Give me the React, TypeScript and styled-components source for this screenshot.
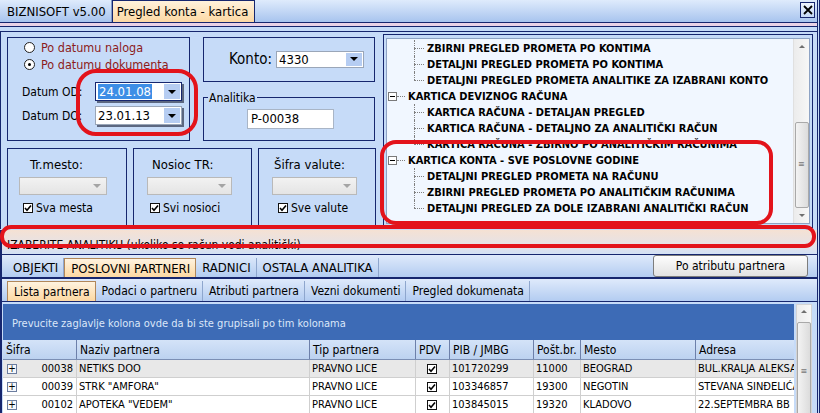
import React from 'react';
import styled, {createGlobalStyle, css} from 'styled-components';

const FONT = `"DejaVu Sans Condensed", "DejaVu Sans", sans-serif`;
const NAVY = '#16266e';
const RED = '#e3131b';
const PANEL = '#c6dbf8';

const GlobalStyle = createGlobalStyle`
  body {
    margin: 0;
    font-family: ${FONT};
    font-size: 11px;
    color: #000;
    background: ${PANEL};
  }
  * { box-sizing: border-box; }
`;

const Window = styled.div`
  position: relative;
  width: 820px;
  height: 413px;
  overflow: hidden;
  background: ${PANEL};
  border-right: 3px double ${NAVY};
`;

/* ---------- title bar ---------- */

const TitleBar = styled.div`
  display: flex;
  height: 23px;
  background: linear-gradient(#dfebfc, #a8c4ee);
  border-bottom: 1px solid ${NAVY};
`;

const TitleTab = styled.div<{ $active?: boolean }>`
  display: flex;
  align-items: center;
  padding: 0 5px 0 7px;
  font-size: 13px;
  border-right: 1px solid #7f9bc9;
  ${({$active}) => $active && css`
    background: linear-gradient(#fff2dc, #fcd8a4);
    border: 1px solid ${NAVY};
    border-bottom: none;
    padding: 0 6px 0 4px;
  `}
`;

const CloseButton = styled.div`
  margin: 2px 2px 0 auto;
  width: 15px;
  height: 16px;
  border: 1px solid ${NAVY};
  background: linear-gradient(#eef4fd, #c4d8f5);
  display: flex;
  align-items: center;
  justify-content: center;
`;

const TitleUnderline = styled.div`
  height: 4px;
  background: #ead2e6;
  border-bottom: 1px solid ${NAVY};
`;

/* ---------- top area ---------- */

const TopFrame = styled.div`
  margin-top: 4px;
  height: 198px;
  border-top: 1px solid ${NAVY};
  border-left: 1px solid ${NAVY};
  padding: 5px 0 0 6px;
  display: flex;
  gap: 7px;
`;

const LeftArea = styled.div`
  width: 369px;
  display: flex;
  flex-direction: column;
  gap: 7px;
`;

const TopRow = styled.div`
  display: flex;
  gap: 13px;
  height: 104px;
`;

const Panel = styled.div<{ $w: number; $h?: number }>`
  width: ${({$w}) => $w}px;
  height: ${({$h}) => ($h ? `${$h}px` : 'auto')};
  border: 1px solid ${NAVY};
  background: ${PANEL};
`;

const DatePanel = styled(Panel)`
  padding: 1px 0 0 16px;
`;

const RadioRow = styled.div`
  display: flex;
  align-items: center;
  gap: 6px;
  height: 17px;
  font-size: 12.5px;
  color: #8c1b1b;
`;

const Radio = styled.span<{ $checked?: boolean }>`
  width: 11px;
  height: 11px;
  border-radius: 50%;
  border: 1px solid #222;
  background: #fff;
  display: flex;
  align-items: center;
  justify-content: center;

  &::after {
    content: '';
    width: 3px;
    height: 3px;
    border-radius: 50%;
    background: ${({$checked}) => ($checked ? '#000' : 'transparent')};
  }
`;

const DateRow = styled.div<{ $mt: number }>`
  display: flex;
  align-items: center;
  margin: ${({$mt}) => $mt}px 0 0 -2px;
  height: 19px;
`;

const FieldLabel = styled.span`
  width: 73px;
  font-size: 12px;
`;

const Combo = styled.div<{ $w: number; $h?: number; $focus?: boolean; $shadow?: boolean }>`
  width: ${({$w}) => $w}px;
  height: ${({$h}) => $h || 19}px;
  display: flex;
  align-items: center;
  justify-content: space-between;
  background: #fff;
  border: 1px solid ${({$focus}) => ($focus ? NAVY : '#9aa6b8')};
  box-shadow: ${({$shadow}) => ($shadow ? '2px 2px 0 #5c6780' : 'none')};
  padding: 0 1px 0 2px;
  font-size: 13px;
`;

const Selected = styled.span`
  background: #3d8ee6;
  color: #fff;
  padding: 0 1px;
  line-height: 15px;
`;

const DropButton = styled.span<{ $disabled?: boolean }>`
  width: 16px;
  height: calc(100% - 2px);
  display: flex;
  align-items: center;
  justify-content: center;
  background: ${({$disabled}) => ($disabled ? 'transparent' : '#b6cdf2')};

  &::after {
    content: '';
    border-left: 4px solid transparent;
    border-right: 4px solid transparent;
    border-top: 4px solid ${({$disabled}) => ($disabled ? '#a4a4a4' : '#000')};
  }
`;

const DisabledCombo = styled(Combo)`
  background: linear-gradient(#f2f2f2, #e4e4e4);
  border-color: #b9b9b9;
`;

const KontoCol = styled.div`
  width: 172px;
  display: flex;
  flex-direction: column;
`;

const KontoPanel = styled(Panel)`
  display: flex;
  align-items: center;
  padding-left: 25px;
  gap: 4px;
  font-size: 15px;
`;

const Fieldset = styled.fieldset`
  margin: 9px 0 0;
  height: 51px;
  border: 1px solid ${NAVY};
  padding: 4px 0 0 5px;
`;

const Legend = styled.legend`
  padding: 0 1px;
  margin-left: -1px;
  font-size: 12px;
  line-height: 14px;
`;

const TextBox = styled.div`
  margin-left: 38px;
  width: 87px;
  height: 20px;
  background: #fff;
  border: 1px solid #a9b5c6;
  font-size: 13px;
  padding: 1px 3px;
`;

const FilterRow = styled.div`
  display: flex;
  gap: 6px;
  height: 80px;
`;

const FilterPanel = styled(Panel)`
  display: flex;
  flex-direction: column;
`;

const FilterLabel = styled.div<{ $indent: number }>`
  margin: 8px 0 0 ${({$indent}) => $indent}px;
  height: 16px;
  font-size: 13px;
`;

const FilterCombo = styled(DisabledCombo)<{ $indent: number }>`
  margin: 4px 0 0 ${({$indent}) => $indent}px;
`;

const CheckRow = styled.div<{ $indent: number }>`
  display: flex;
  align-items: center;
  gap: 3px;
  margin: 6px 0 0 ${({$indent}) => $indent}px;
  font-size: 12px;
`;

const CheckBox = styled.span`
  width: 10px;
  height: 10px;
  border: 1px solid #111;
  background: #fff;
  display: inline-flex;
  align-items: center;
  justify-content: center;
`;

/* ---------- tree ---------- */

const TreePanel = styled.div`
  width: 430px;
  height: 194px;
  margin-top: -3px;
  border: 1px solid ${NAVY};
  padding: 3px 2px 3px 2px;
`;

const TreeBody = styled.div`
  height: 100%;
  background: #f1f7ff;
  border: 1px solid #8ea3c4;
  display: flex;
`;

const TreeList = styled.div`
  flex: 1;
  padding-top: 1px;
  overflow: hidden;
`;

const TreeRow = styled.div`
  display: flex;
  align-items: center;
  height: 16px;
  font-weight: bold;
  font-size: 11px;
  white-space: nowrap;
`;

const ExpandBox = styled.span`
  margin-left: 1px;
  width: 9px;
  height: 9px;
  border: 1px solid #7a7a7a;
  background: #fff;
  display: flex;
  align-items: center;
  justify-content: center;

  &::after {
    content: '';
    width: 5px;
    border-top: 1px solid #000;
  }
`;

const RootConnector = styled.span`
  width: 8px;
  margin-right: 3px;
  border-top: 1px dotted #808080;
`;

const Connector = styled.span<{ $last?: boolean }>`
  position: relative;
  margin: 0 3px 0 27px;
  width: 10px;
  height: 16px;

  &::before {
    content: '';
    position: absolute;
    left: 0;
    top: 0;
    bottom: ${({$last}) => ($last ? '50%' : '0')};
    border-left: 1px dotted #808080;
  }

  &::after {
    content: '';
    position: absolute;
    left: 0;
    right: 0;
    top: 50%;
    border-top: 1px dotted #808080;
  }
`;

const ScrollTrack = styled.div<{ $w?: number }>`
  width: ${({$w}) => $w || 16}px;
  display: flex;
  flex-direction: column;
  align-items: center;
  background: linear-gradient(90deg, #ececec, #f7f7f7);
  border-left: 1px solid #e0e0e0;
`;

const ScrollArrow = styled.span<{ $down?: boolean }>`
  height: 16px;
  display: flex;
  align-items: center;

  &::after {
    content: '';
    border-left: 3px solid transparent;
    border-right: 3px solid transparent;
    ${({$down}) => ($down ? 'border-top' : 'border-bottom')}: 3px solid #6f6f6f;
  }
`;

const ScrollThumb = styled.div<{ $top: number; $h: number }>`
  margin-top: ${({$top}) => $top}px;
  width: 14px;
  height: ${({$h}) => $h}px;
  border: 1px solid #a9a9a9;
  border-radius: 2px;
  background: linear-gradient(90deg, #f3f3f3, #dcdcdc);
  display: flex;
  align-items: center;
  justify-content: center;
  color: #777;
  font-size: 9px;
  line-height: 1;
`;

/* ---------- bottom area ---------- */

const HintStrip = styled.div`
  height: 24px;
  margin-top: 1px;
  background: linear-gradient(#f5e1d3, #e6e2e6 60%, #d3e1f5);
  border-left: 2px solid ${NAVY};
  padding: 8px 0 0 5px;
  font-size: 12px;
`;

const TabBar = styled.div<{ $h: number }>`
  display: flex;
  align-items: flex-end;
  height: ${({$h}) => $h}px;
  padding-left: 5px;
  background: linear-gradient(#dfeafb, #b3ccf1);
  border-top: 1px solid ${NAVY};
  border-left: 2px solid ${NAVY};
  border-bottom: 1px solid ${NAVY};
`;

const Tab = styled.div<{ $active?: boolean; $h: number; $size?: number }>`
  height: ${({$h}) => $h}px;
  display: flex;
  align-items: center;
  padding: 0 5px 0 6px;
  font-size: ${({$size}) => $size || 12}px;
  border-right: 1px solid #8ea6cd;
  ${({$active}) => $active && css`
    background: linear-gradient(#fff3df, #fcd8a2);
    border: 1px solid #b1875a;
    border-bottom: none;
  `}
`;

const ActionButton = styled.div`
  margin: 0 9px 1px auto;
  align-self: center;
  width: 155px;
  height: 22px;
  border: 1px solid #7d7d7d;
  border-radius: 3px;
  background: linear-gradient(#fdfdfd, #e2e2e2);
  display: flex;
  align-items: center;
  justify-content: center;
  font-size: 12px;
`;

const GridArea = styled.div`
  display: flex;
  border-left: 2px solid ${NAVY};
  padding: 2px 0 0 1px;
  height: 120px;
`;

const Grid = styled.div`
  width: 791px;
`;

const GroupPanel = styled.div`
  height: 36px;
  background: #3d6bb6;
  color: #dbe7f9;
  font-size: 11px;
  padding: 13px 0 0 9px;
`;

const COLS = '73px 233px 106px 34px 84px 47px 115px 99px';

const HeaderRow = styled.div`
  display: grid;
  grid-template-columns: ${COLS};
  height: 20px;
  background: linear-gradient(#d4e3f8, #bcd2f0);
  border-bottom: 1px solid #7b8fb4;
`;

const HeaderCell = styled.div`
  display: flex;
  align-items: center;
  padding-left: 3px;
  font-size: 12px;
  border-left: 1px solid #6d80aa;
  white-space: nowrap;
  overflow: hidden;

  &:first-child {
    border-left: none;
  }
`;

const DataRow = styled.div<{ $selected?: boolean }>`
  display: grid;
  grid-template-columns: ${COLS};
  height: 18px;
  background: ${({$selected}) => ($selected ? '#e8e8e8' : '#fff')};
  border-bottom: 1px solid #cfcfcf;
`;

const Cell = styled.div<{ $align?: 'right' | 'center' }>`
  display: flex;
  align-items: center;
  justify-content: ${({$align}) => ($align === 'center' ? 'center' : 'flex-start')};
  padding: 0 3px 0 2px;
  border-left: 1px solid #cfcfcf;
  font-size: 11px;
  white-space: nowrap;
  overflow: hidden;

  &:first-child {
    border-left: none;
  }
`;

const PlusBox = styled.span`
  width: 10px;
  height: 10px;
  border: 1px solid #6b7d9f;
  background: #f6f8fc;
  display: inline-flex;
  align-items: center;
  justify-content: center;
  font-size: 10px;
  line-height: 1;
  margin: 0 auto 0 2px;
`;

const Code = styled.span`
  margin-left: auto;
`;

const GridScroll = styled(ScrollTrack)`
  margin-left: 2px;
  border: 1px solid #d4d4d4;
`;

/* ---------- annotations ---------- */

const Mark = styled.div<{ $x: number; $y: number; $w: number; $h: number; $r: number }>`
  position: absolute;
  left: ${({$x}) => $x}px;
  top: ${({$y}) => $y}px;
  width: ${({$w}) => $w}px;
  height: ${({$h}) => $h}px;
  border: 4px solid ${RED};
  border-radius: ${({$r}) => $r}px;
  pointer-events: none;
`;

/* ---------- data ---------- */

type TreeItem = { label: string; level: 0 | 1; last?: boolean };

const treeItems: TreeItem[] = [
  {label: 'ZBIRNI PREGLED PROMETA PO KONTIMA', level: 1},
  {label: 'DETALJNI PREGLED PROMETA PO KONTIMA', level: 1},
  {label: 'DETALJNI PREGLED PROMETA ANALITIKE ZA IZABRANI KONTO', level: 1, last: true},
  {label: 'KARTICA DEVIZNOG RAČUNA', level: 0},
  {label: 'KARTICA RAČUNA - DETALJAN PREGLED', level: 1},
  {label: 'KARTICA RAČUNA - DETALJNO ZA ANALITIČKI RAČUN', level: 1},
  {label: 'KARTICA RAČUNA - ZBIRNO PO ANALITIČKIM RAČUNIMA', level: 1, last: true},
  {label: 'KARTICA KONTA - SVE POSLOVNE GODINE', level: 0},
  {label: 'DETALJNI PREGLED PROMETA NA RAČUNU', level: 1},
  {label: 'ZBIRNI PREGLED PROMETA PO ANALITIČKIM RAČUNIMA', level: 1},
  {label: 'DETALJNI PREGLED ZA DOLE IZABRANI ANALITIČKI RAČUN', level: 1, last: true},
];

const filters = [
  {label: 'Tr.mesto:', check: 'Sva mesta', w: 120, li: 22, ci: 11, cw: 88, ki: 15},
  {label: 'Nosioc TR:', check: 'Svi nosioci', w: 119, li: 18, ci: 13, cw: 85, ki: 16},
  {label: 'Šifra valute:', check: 'Sve valute', w: 118, li: 15, ci: 13, cw: 85, ki: 19},
];

const columns = ['Šifra', 'Naziv partnera', 'Tip partnera', 'PDV', 'PIB / JMBG', 'Pošt.br.', 'Mesto', 'Adresa'];

const partners = [
  {code: '00038', name: 'NETIKS DOO', type: 'PRAVNO LICE', pib: '101720299', zip: '11000', city: 'BEOGRAD', addr: 'BUL.KRALJA ALEKSANDRA'},
  {code: '00039', name: 'STRK "AMFORA"', type: 'PRAVNO LICE', pib: '103346857', zip: '19300', city: 'NEGOTIN', addr: 'STEVANA SINĐELIĆA'},
  {code: '00102', name: 'APOTEKA "VEDEM"', type: 'PRAVNO LICE', pib: '103845015', zip: '19320', city: 'KLADOVO', addr: '22.SEPTEMBRA BB'},
];

const Check = () => (
  <CheckBox>
    <svg width="8" height="8" viewBox="0 0 8 8">
      <path d="M1 4 L3 6.2 L7 1.5" stroke="#000" strokeWidth="1.6" fill="none"/>
    </svg>
  </CheckBox>
);

const App = () => {
  return (
    <Window>
      <GlobalStyle/>
      <TitleBar>
        <TitleTab>BIZNISOFT v5.00</TitleTab>
        <TitleTab $active>Pregled konta - kartica</TitleTab>
        <CloseButton>
          <svg width="10" height="10" viewBox="0 0 10 10">
            <path d="M1 1 L9 9 M9 1 L1 9" stroke="#000" strokeWidth="1.8"/>
          </svg>
        </CloseButton>
      </TitleBar>
      <TitleUnderline/>

      <TopFrame>
        <LeftArea>
          <TopRow>
            <DatePanel $w={183}>
              <RadioRow><Radio/>Po datumu naloga</RadioRow>
              <RadioRow><Radio $checked/>Po datumu dokumenta</RadioRow>
              <DateRow $mt={9}>
                <FieldLabel>Datum OD:</FieldLabel>
                <Combo $w={87} $focus $shadow><Selected>24.01.08</Selected><DropButton/></Combo>
              </DateRow>
              <DateRow $mt={5}>
                <FieldLabel>Datum DO:</FieldLabel>
                <Combo $w={87} $shadow>23.01.13<DropButton/></Combo>
              </DateRow>
            </DatePanel>
            <KontoCol>
              <KontoPanel $w={172} $h={45}>
                Konto:
                <Combo $w={88} $h={17}>4330<DropButton/></Combo>
              </KontoPanel>
              <Fieldset>
                <Legend>Analitika</Legend>
                <TextBox>P-00038</TextBox>
              </Fieldset>
            </KontoCol>
          </TopRow>
          <FilterRow>
            {filters.map(f => (
              <FilterPanel key={f.label} $w={f.w}>
                <FilterLabel $indent={f.li}>{f.label}</FilterLabel>
                <FilterCombo $indent={f.ci} $w={f.cw} $h={18}><span/><DropButton $disabled/></FilterCombo>
                <CheckRow $indent={f.ki}><Check/>{f.check}</CheckRow>
              </FilterPanel>
            ))}
          </FilterRow>
        </LeftArea>

        <TreePanel>
          <TreeBody>
            <TreeList>
              {treeItems.map(item => (
                <TreeRow key={item.label}>
                  {item.level === 0
                    ? <><ExpandBox/><RootConnector/></>
                    : <Connector $last={item.last}/>}
                  {item.label}
                </TreeRow>
              ))}
            </TreeList>
            <ScrollTrack>
              <ScrollArrow/>
              <ScrollThumb $top={68} $h={88}>≡</ScrollThumb>
              <ScrollArrow $down/>
            </ScrollTrack>
          </TreeBody>
        </TreePanel>
      </TopFrame>

      <HintStrip>IZABERITE ANALITIKU (ukoliko se račun vodi analitički)</HintStrip>

      <TabBar $h={24}>
        <Tab $h={19} $size={13}>OBJEKTI</Tab>
        <Tab $h={19} $size={13} $active>POSLOVNI PARTNERI</Tab>
        <Tab $h={19} $size={13}>RADNICI</Tab>
        <Tab $h={19} $size={13}>OSTALA ANALITIKA</Tab>
        <ActionButton>Po atributu partnera</ActionButton>
      </TabBar>
      <TabBar $h={24}>
        <Tab $h={20} $active>Lista partnera</Tab>
        <Tab $h={20}>Podaci o partneru</Tab>
        <Tab $h={20}>Atributi partnera</Tab>
        <Tab $h={20}>Vezni dokumenti</Tab>
        <Tab $h={20}>Pregled dokumenata</Tab>
      </TabBar>

      <GridArea>
        <Grid>
          <GroupPanel>Prevucite zaglavlje kolona ovde da bi ste grupisali po tim kolonama</GroupPanel>
          <HeaderRow>
            {columns.map(c => <HeaderCell key={c}>{c}</HeaderCell>)}
          </HeaderRow>
          {partners.map((p, i) => (
            <DataRow key={p.code} $selected={i === 0}>
              <Cell><PlusBox>+</PlusBox><Code>{p.code}</Code></Cell>
              <Cell>{p.name}</Cell>
              <Cell>{p.type}</Cell>
              <Cell $align="center"><Check/></Cell>
              <Cell>{p.pib}</Cell>
              <Cell>{p.zip}</Cell>
              <Cell>{p.city}</Cell>
              <Cell>{p.addr}</Cell>
            </DataRow>
          ))}
        </Grid>
        <GridScroll>
          <ScrollArrow/>
          <ScrollThumb $top={4} $h={120}>≡</ScrollThumb>
        </GridScroll>
      </GridArea>

      <Mark $x={76} $y={69} $w={122} $h={67} $r={20}/>
      <Mark $x={380} $y={140} $w={393} $h={85} $r={16}/>
      <Mark $x={0} $y={225} $w={816} $h={23} $r={11}/>
    </Window>
  );
};

export default App;
